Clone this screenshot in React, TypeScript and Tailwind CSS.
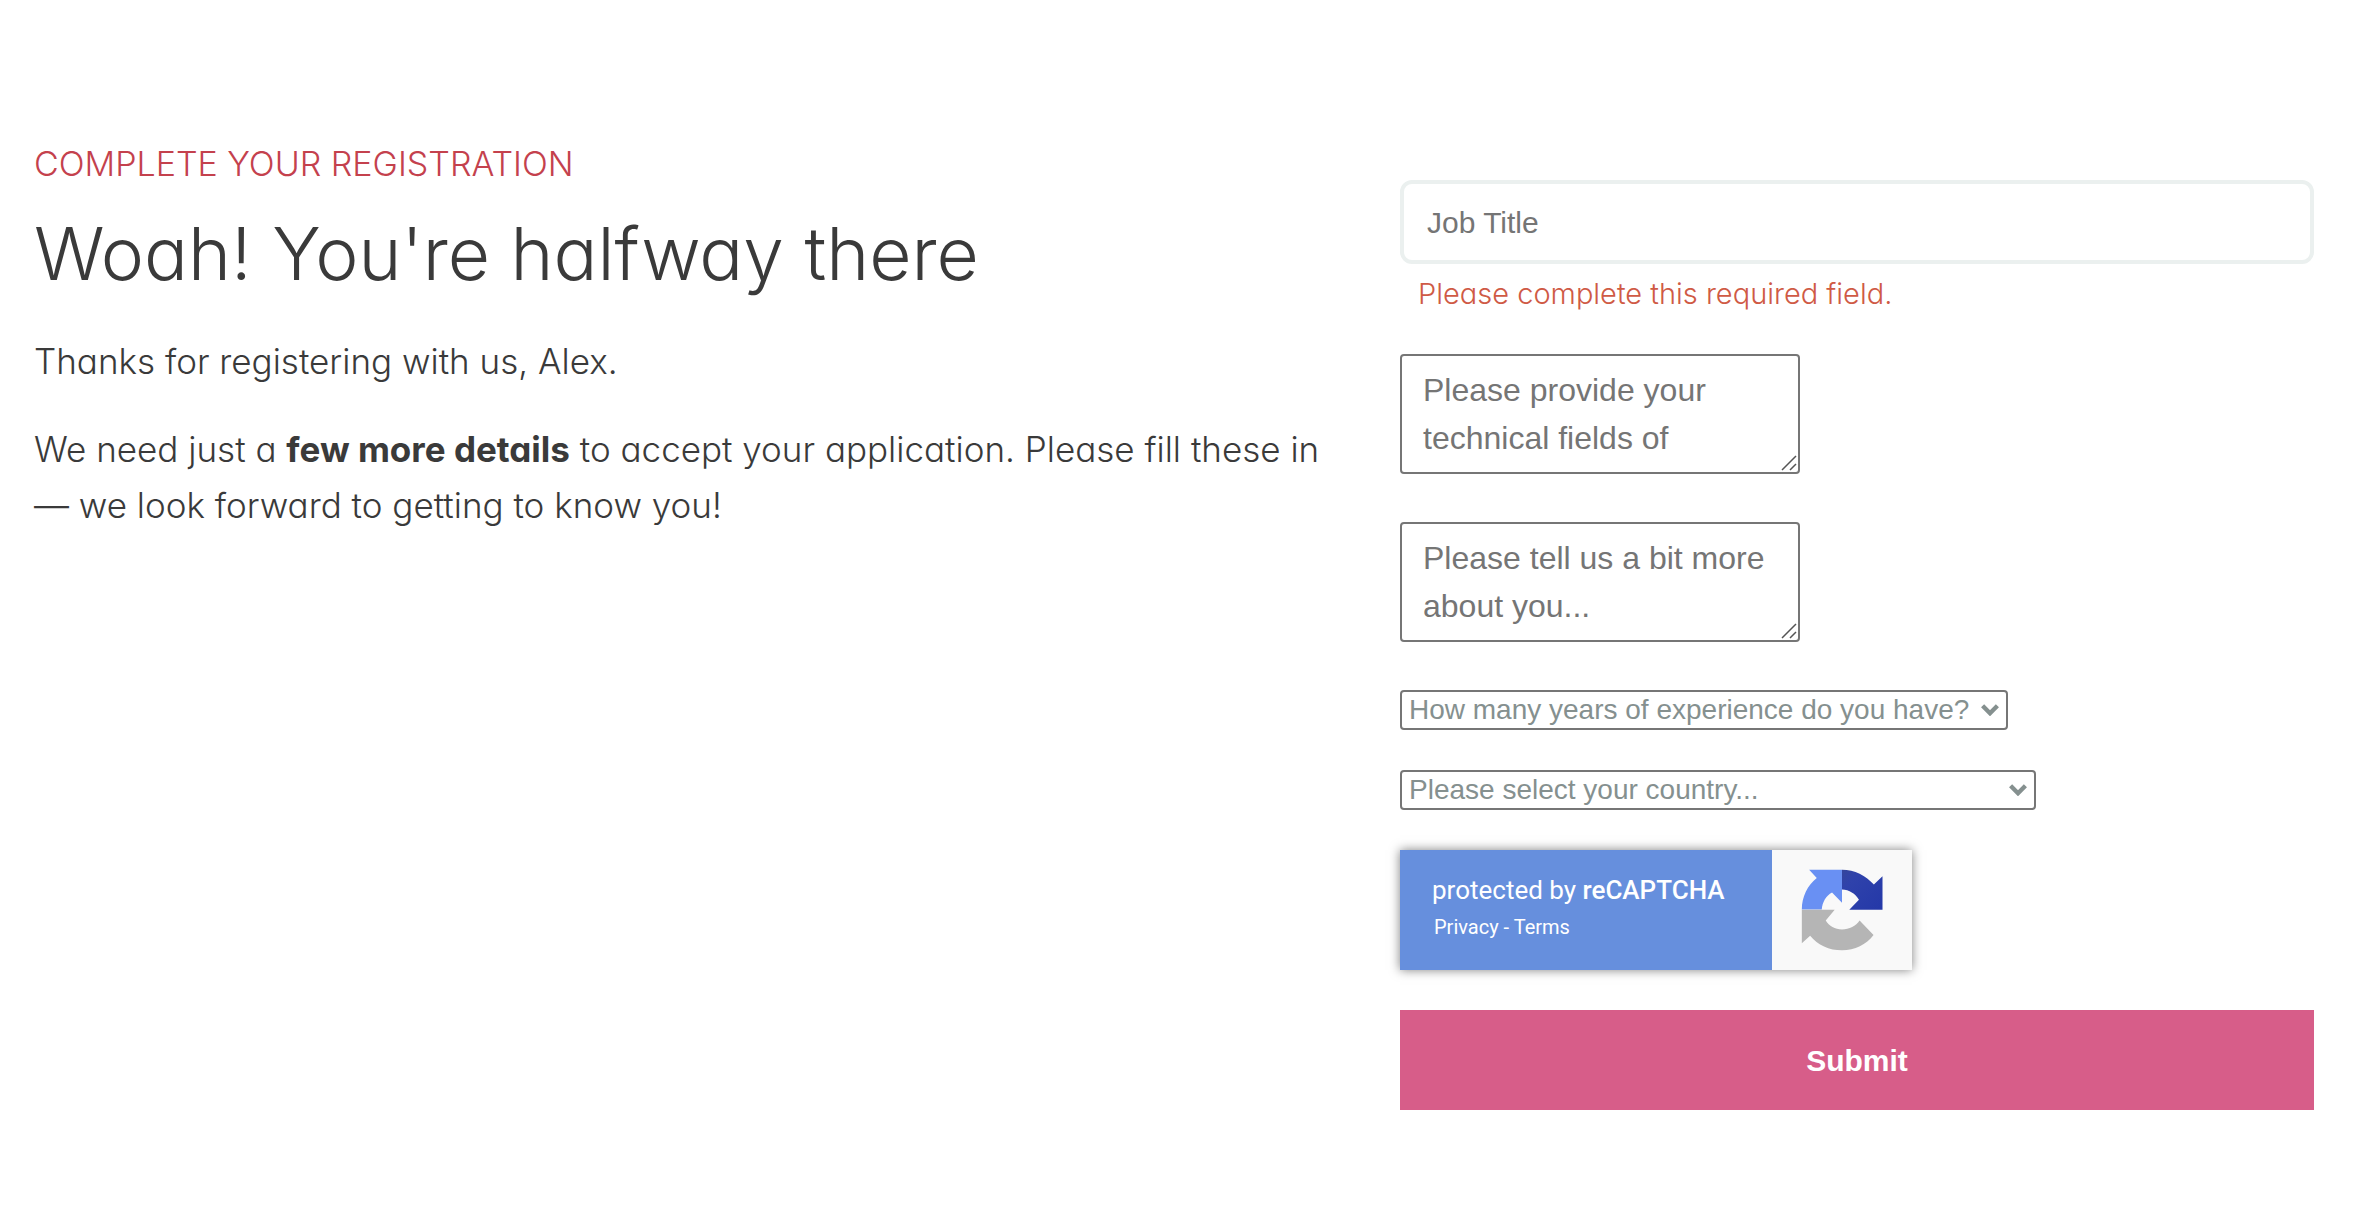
import type { ReactNode } from "react";

function ResizableText({ label }: { label: string }) {
  return (
    <div className="relative h-[120px] w-[400px] max-w-full">
      <textarea
        aria-label={label}
        placeholder={label}
        className="block h-full w-full resize-none overflow-hidden rounded-[4px] border-2 border-[#767676] bg-white px-[21px] py-[10px] text-[32px] leading-[48px] text-[#333] placeholder:text-[#757575]"
      />
      <svg
        aria-hidden="true"
        viewBox="0 0 16 16"
        className="pointer-events-none absolute right-[3px] bottom-[3px] size-4 fill-none stroke-[#555]"
        strokeWidth="1.5"
      >
        <path d="M1 15 15 1M9 15l6-6" />
      </svg>
    </div>
  );
}

function Dropdown({ label, width }: { label: string; width: string }) {
  return (
    <div className={`relative h-10 max-w-full ${width}`}>
      <select
        aria-label={label}
        defaultValue=""
        className="block h-full w-full appearance-none rounded-[4px] border-2 border-[#767676] bg-white pl-[7px] text-[28px] leading-[36px] text-[#85908f]"
      >
        <option value="">{label}</option>
      </select>
      <svg
        aria-hidden="true"
        viewBox="0 0 18 12"
        className="pointer-events-none absolute top-[14px] right-[9px] h-3 w-[18px] fill-none stroke-[#85908f]"
        strokeWidth="4.4"
      >
        <path d="M1.6 1.8 9 9.2l7.4-7.4" />
      </svg>
    </div>
  );
}

function CaptchaLogo() {
  return (
    <svg aria-hidden="true" viewBox="123 88 246 247" className="h-[82px] w-[82px]">
      <defs>
        <linearGradient id="navy" x1="0" y1="0" x2="1" y2="1">
          <stop offset="0" stopColor="#35469c" />
          <stop offset="0.25" stopColor="#2f42ab" />
          <stop offset="1" stopColor="#2438a8" />
        </linearGradient>
      </defs>
      <path
        fill="#6990f3"
        d="M147 90H246V190L216 159C198 168 187 188 185 210H125C125 172 142 137 170 115Z"
      />
      <path
        fill="url(#navy)"
        d="M246 90C284 90 318 107 342 135L368 110V211H268L297 181C286 162 268 151 246 150Z"
      />
      <path
        fill="#b5b5b5"
        d="M125 211H224L197 243C207 260 225 270 246 270C268 270 288 260 299 243L341 287C319 316 285 333 246 333C207 333 173 317 150 289L125 312Z"
      />
    </svg>
  );
}

function Captcha() {
  return (
    <div className="flex h-[120px] w-[512px] max-w-full bg-[#f9f9f9] shadow-[0_0_10px_rgba(0,0,0,0.5)]">
      <div className="w-[372px] bg-[#668fdd] pt-[22px] pl-8 font-[Roboto,sans-serif] text-white">
        <p className="text-[26px] leading-9">
          protected by <span className="font-medium">reCAPTCHA</span>
        </p>
        <p className="mt-1 pl-0.5 text-[20px] leading-[30px]">
          <a href="#privacy">Privacy</a> <span>-</span> <a href="#terms">Terms</a>
        </p>
      </div>
      <div className="flex flex-1 justify-center pt-[19px]">
        <CaptchaLogo />
      </div>
    </div>
  );
}

function Intro({ children }: { children: ReactNode }) {
  return (
    <section className="pt-[136px] font-[Inter,sans-serif] font-light text-[#3a3a3a] [font-feature-settings:'cv11']">
      {children}
    </section>
  );
}

export default function App() {
  return (
    <main className="grid min-h-screen grid-cols-[1310fr_914fr] gap-14 bg-white pr-14 pb-28 pl-[34px] font-['Liberation_Sans',sans-serif]">
      <Intro>
        <p className="text-[34px] leading-[56px] text-[#c4414d]">COMPLETE YOUR REGISTRATION</p>
        <h1 className="mt-[18px] text-[73px] leading-[88px]">Woah! You're halfway there</h1>
        <p className="mt-[35px] text-[35px] leading-[56px]">Thanks for registering with us, Alex.</p>
        <p className="mt-8 text-[35px] leading-[56px]">
          We need just a <strong className="font-bold">few more details</strong> to accept your
          application. Please fill these in — we look forward to getting to know you!
        </p>
      </Intro>

      <form className="flex min-w-0 flex-col items-start pt-[180px]" onSubmit={(e) => e.preventDefault()}>
        <input
          type="text"
          aria-label="Job Title"
          aria-describedby="job-error"
          placeholder="Job Title"
          className="h-[84px] w-full rounded-xl border-4 border-[#ebf0ef] px-[23px] pt-0.5 text-[30px] text-[#333] placeholder:text-[#757575]"
        />
        <p
          id="job-error"
          className="mt-3 pl-[18px] font-[Inter,sans-serif] text-[29px] leading-9 font-light text-[#cf5a45] [font-feature-settings:'cv11']"
        >
          Please complete this required field.
        </p>
        <div className="mt-[42px] flex w-full flex-col gap-12">
          <ResizableText label="Please provide your technical fields of" />
          <ResizableText label="Please tell us a bit more about you..." />
        </div>
        <div className="mt-12 flex w-full flex-col gap-10">
          <Dropdown label="How many years of experience do you have?" width="w-[608px]" />
          <Dropdown label="Please select your country..." width="w-[636px]" />
          <Captcha />
          <button type="submit" className="h-[100px] w-full bg-[#d75d89] text-[30px] font-bold text-white">
            Submit
          </button>
        </div>
      </form>
    </main>
  );
}
